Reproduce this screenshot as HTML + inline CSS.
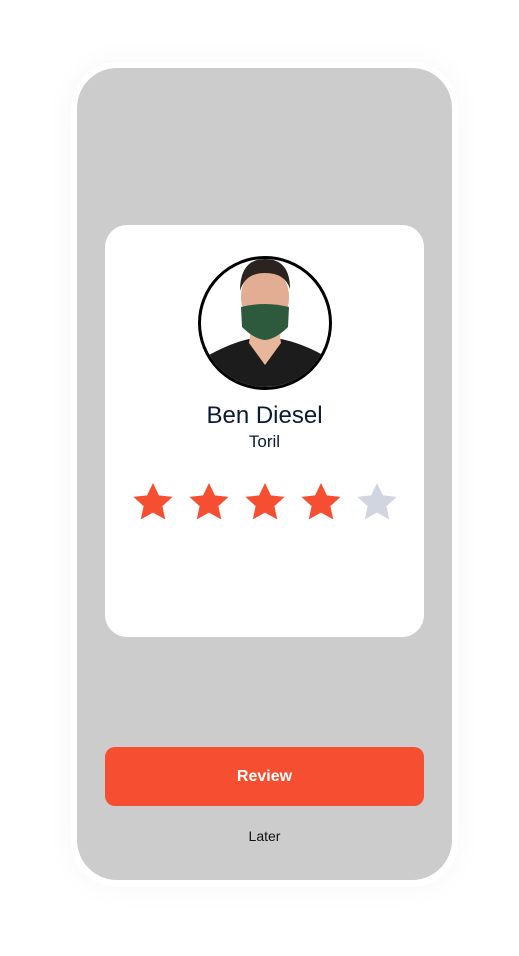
<!DOCTYPE html>
<html><head><style>
body{margin:0;width:519px;height:956px;background:#fff;font-family:"Liberation Sans",sans-serif;position:relative;overflow:hidden}
.outer{position:absolute;left:71px;top:62px;width:387px;height:825px;border-radius:46px;background:#fff;box-shadow:0 0 30px rgba(0,0,0,0.04)}
.phone{position:absolute;left:77px;top:68px;width:375px;height:812px;border-radius:40px;background:#cccccc}
.card{position:absolute;left:105px;top:225px;width:319px;height:412px;border-radius:22px;background:#fff}
.av{position:absolute;left:198px;top:256px;width:128px;height:128px;border-radius:50%;border:3px solid #000;overflow:hidden;background:#fff}
.name{position:absolute;left:105px;width:319px;text-align:center;top:402px;font-size:24px;color:#0b1a33}
.sub{position:absolute;left:105px;width:319px;text-align:center;top:432px;font-size:17px;color:#0b1a33}
.btn{position:absolute;left:105px;top:747px;width:319px;height:59px;border-radius:10px;background:#f54e30;color:#fff;font-weight:bold;font-size:16px;text-align:center;line-height:59px}
.later{position:absolute;left:105px;width:319px;text-align:center;top:828px;font-size:14px;color:#111}
</style></head><body>
<div class="outer"></div>
<div class="phone"></div>
<div class="card"></div>
<div class="av"><svg width="128" height="128" viewBox="0 0 128 128">
<path d="M0 128 L8 96 Q30 84 48 80 L80 80 Q100 84 122 96 L128 128Z" fill="#1c1c1c"/>
<path d="M50 70 L78 70 L80 84 L64 106 L48 84Z" fill="#e8b69a"/>
<ellipse cx="64" cy="38" rx="24" ry="30" fill="#e2ad92"/>
<path d="M39 32 Q39 0 64 0 Q89 0 89 30 Q84 14 64 14 Q44 14 39 32Z" fill="#2a2320"/>
<path d="M40 48 Q64 42 88 48 L87 68 Q75 80 64 81 Q53 80 41 68Z" fill="#2d5a3c"/>
</svg></div>
<div class="name">Ben Diesel</div>
<div class="sub">Toril</div>
<svg style="position:absolute;left:0;top:0" width="519" height="956">
<defs><path id="s" d="M0,-20 L5.9,-7.6 L19.6,-6.1 L9.4,3.1 L12.2,16.4 L0,9.6 L-12.2,16.4 L-9.4,3.1 L-19.6,-6.1 L-5.9,-7.6Z"/></defs>
<use href="#s" x="153" y="503" fill="#f54e30"/>
<use href="#s" x="209" y="503" fill="#f54e30"/>
<use href="#s" x="265" y="503" fill="#f54e30"/>
<use href="#s" x="321" y="503" fill="#f54e30"/>
<use href="#s" x="377" y="503" fill="#d1d5df"/>
</svg>
<div class="btn">Review</div>
<div class="later">Later</div>
</body></html>
